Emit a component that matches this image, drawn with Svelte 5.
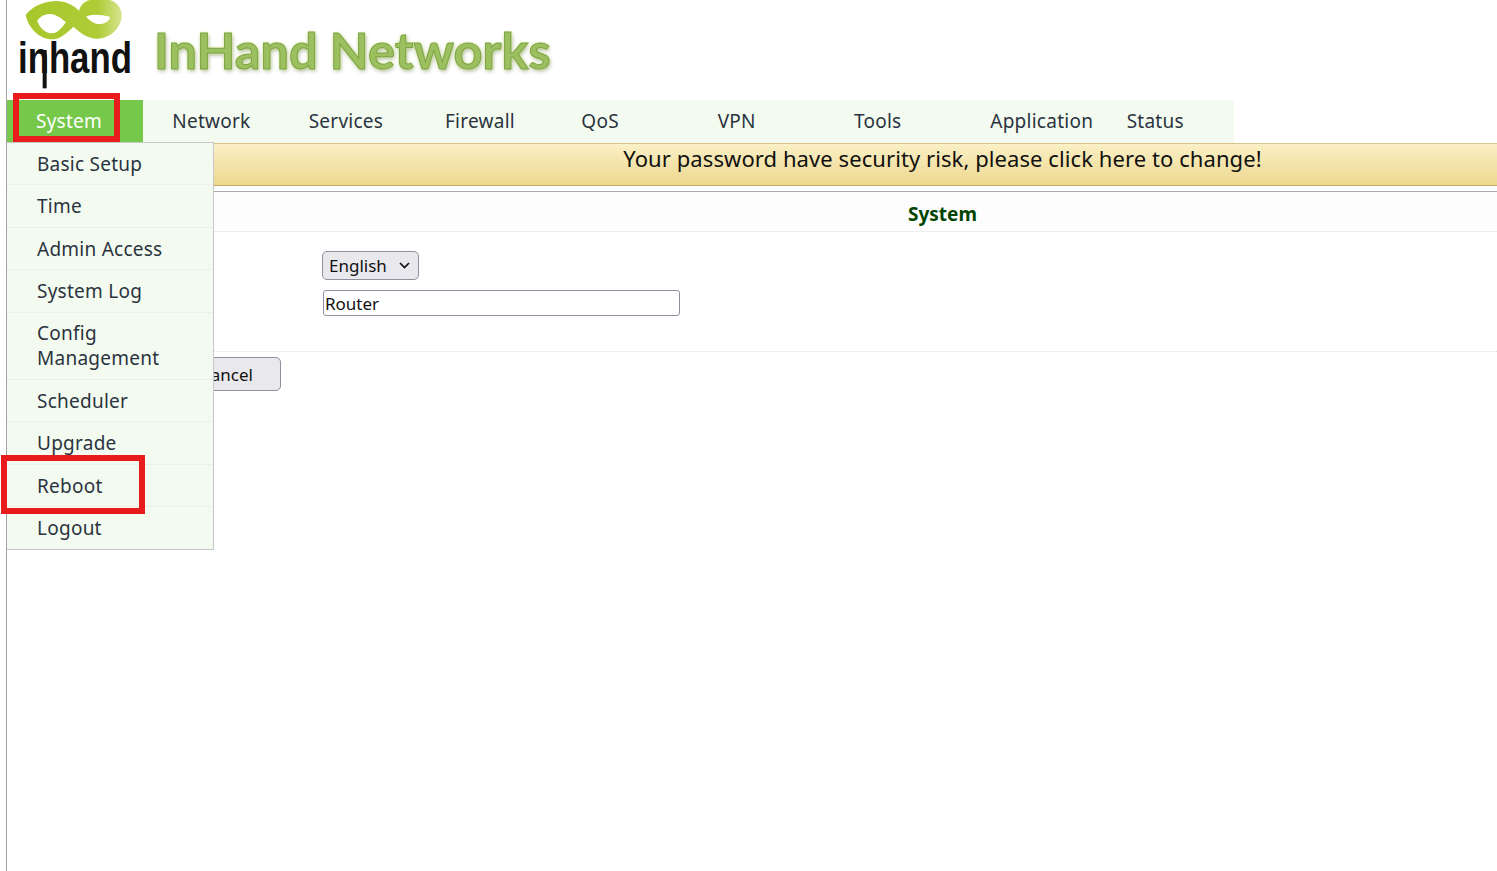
<script lang="ts">
  const navItems = ['System', 'Network', 'Services', 'Firewall', 'QoS', 'VPN', 'Tools', 'Application', 'Status'];
  const menuItems = ['Basic Setup', 'Time', 'Admin Access', 'System Log', 'Config Management', 'Scheduler', 'Upgrade', 'Reboot', 'Logout'];
</script>

<div class="page">
  <header class="header">
    <svg class="logo" width="130" height="95" viewBox="0 0 390 285">
      <defs>
        <linearGradient id="leaf" x1="0" y1="0" x2="1" y2="0">
          <stop offset="0" stop-color="#a6c72c" />
          <stop offset="0.75" stop-color="#afcc36" />
          <stop offset="1" stop-color="#d6e48e" />
        </linearGradient>
      </defs>
      <path
        fill="url(#leaf)"
        fill-rule="evenodd"
        d="M47 45C65 20 100 5 135 3C165 2 190 15 207 32C212 15 225 3 240 0L300 0C325 8 337 30 335 50C332 85 300 115 262 116C230 116 208 95 190 80C170 100 150 118 125 118C90 118 55 85 47 45Z
           M82 62C95 42 120 38 135 45C150 52 160 60 168 66C155 85 140 100 128 100C105 100 88 82 82 62Z
           M228 50C240 42 270 42 300 50C300 62 285 72 268 72C252 72 240 62 228 50Z"
      />
      <text class="logo-word" transform="translate(24 219) scale(0.79 1)">inhand</text>
      <rect x="98" y="150" width="12" height="115" fill="#111" />
    </svg>
    <span class="brand">InHand Networks</span>
  </header>

  <nav class="nav">
    {#each navItems as item, i}
      <span class="nav-item" class:active={i === 0}>{item}</span>
    {/each}
  </nav>

  <div class="banner">Your password have security risk, please click here to change!</div>

  <div class="section-title">System</div>

  <div class="form">
    <div class="select">
      <span>English</span>
      <svg width="11" height="7" viewBox="0 0 11 7"><path d="M1 1l4.5 4.5L10 1" fill="none" stroke="#111" stroke-width="1.7" /></svg>
    </div>
    <input class="text-input" value="Router" />
  </div>

  <div class="actions">
    <button class="cancel">Cancel</button>
  </div>

  <ul class="menu">
    {#each menuItems as item}
      <li>{item}</li>
    {/each}
  </ul>

  <div class="mark mark-system"></div>
  <div class="mark mark-reboot"></div>
</div>

<style>
  :global(body) {
    margin: 0;
    background: #fff;
  }
  .page {
    position: relative;
    box-sizing: border-box;
    min-height: 871px;
    margin-left: 6px;
    border-left: 1px solid #a4a4a8;
    font-family: "Noto Sans", "Open Sans", sans-serif;
    color: #222;
  }
  .header {
    display: flex;
    height: 100px;
    overflow: hidden;
  }
  .logo {
    display: block;
    flex: none;
    margin-left: 3px;
  }
  .logo-word {
    font-family: "Liberation Sans", sans-serif;
    font-size: 132px;
    font-weight: 700;
    fill: #111;
  }
  .brand {
    margin: 14px 0 0 14px;
    height: 72px;
    font-family: Lato, sans-serif;
    font-size: 50.5px;
    font-weight: 700;
    line-height: 72px;
    color: #9cc060;
    -webkit-text-stroke: 1px #7da445;
    text-shadow: 0 0 3px #d9ee80, 1px 2px 4px #a3b08f;
    filter: blur(0.4px);
  }
  .nav {
    display: flex;
    width: 1227px;
    height: 43px;
    background: #f3fbf0;
  }
  .nav-item {
    flex: 1;
    padding: 9px 0 0 29px;
    font-size: 19px;
    line-height: 24px;
    letter-spacing: 0.25px;
    color: #2b3340;
  }
  .nav-item.active {
    background: #76c84a;
    color: #fff;
  }
  .banner {
    box-sizing: border-box;
    height: 43px;
    padding-left: 381px;
    border-top: 1px solid #d8c48a;
    border-bottom: 1px solid #c4ad6c;
    background: linear-gradient(#fbf0c6, #edd88f);
    font-size: 22px;
    line-height: 28px;
    letter-spacing: 0.08px;
    text-align: center;
    color: #111;
  }
  .section-title {
    box-sizing: border-box;
    height: 41px;
    margin-top: 5px;
    padding-left: 381px;
    border-top: 1px solid #aaa;
    border-bottom: 1px solid #eee;
    background: #fdfdfd;
    font-size: 19px;
    font-weight: 700;
    line-height: 44px;
    text-align: center;
    color: #004400;
  }
  .form {
    display: flex;
    flex-direction: column;
    align-items: flex-start;
    gap: 10px;
    height: 120px;
    box-sizing: border-box;
    padding: 19px 0 0 315px;
    border-bottom: 1px dotted #ddd;
  }
  .select {
    display: flex;
    align-items: center;
    justify-content: space-between;
    box-sizing: border-box;
    width: 97px;
    height: 29px;
    padding: 0 8px 0 6px;
    border: 1px solid #8f8f9d;
    border-radius: 5px;
    background: #e9e9ed;
    font-size: 17px;
    color: #111;
  }
  .text-input {
    box-sizing: border-box;
    width: 357px;
    height: 26px;
    margin-left: 1px;
    padding: 0 2px 0 1px;
    border: 1px solid #8f8f9d;
    border-radius: 3px;
    background: #fff;
    font: 17px "Noto Sans", "Open Sans", sans-serif;
    color: #111;
  }
  .actions {
    padding: 5px 0 0 141px;
  }
  .cancel {
    box-sizing: border-box;
    width: 133px;
    height: 34px;
    padding: 0 27px 0 0;
    border: 1px solid #8f8f9d;
    border-radius: 5px;
    background: #e9e9ed;
    font: 17px "Noto Sans", "Open Sans", sans-serif;
    text-align: right;
    color: #111;
  }
  .menu {
    position: absolute;
    top: 142px;
    left: 0;
    width: 206px;
    margin: 0;
    padding: 0;
    list-style: none;
    background: #f3fbf0;
    border-right: 1px solid #c8c8c8;
    border-bottom: 1px solid #c8c8c8;
    border-top: 1px solid #c8c8c8;
    font-size: 19px;
    line-height: 25px;
    letter-spacing: 0.25px;
    color: #2b3340;
  }
  .menu li {
    padding: 8.8px 40px 7.6px 30px;
    border-bottom: 1px solid #eeeeee;
  }
  .menu li:last-child {
    border-bottom: none;
  }
  .mark {
    position: absolute;
    box-sizing: border-box;
    border: 6px solid #e81c1c;
  }
  .mark-system {
    top: 93px;
    left: 6px;
    width: 107px;
    height: 49px;
  }
  .mark-reboot {
    top: 455px;
    left: -6px;
    width: 144px;
    height: 59px;
  }
</style>
